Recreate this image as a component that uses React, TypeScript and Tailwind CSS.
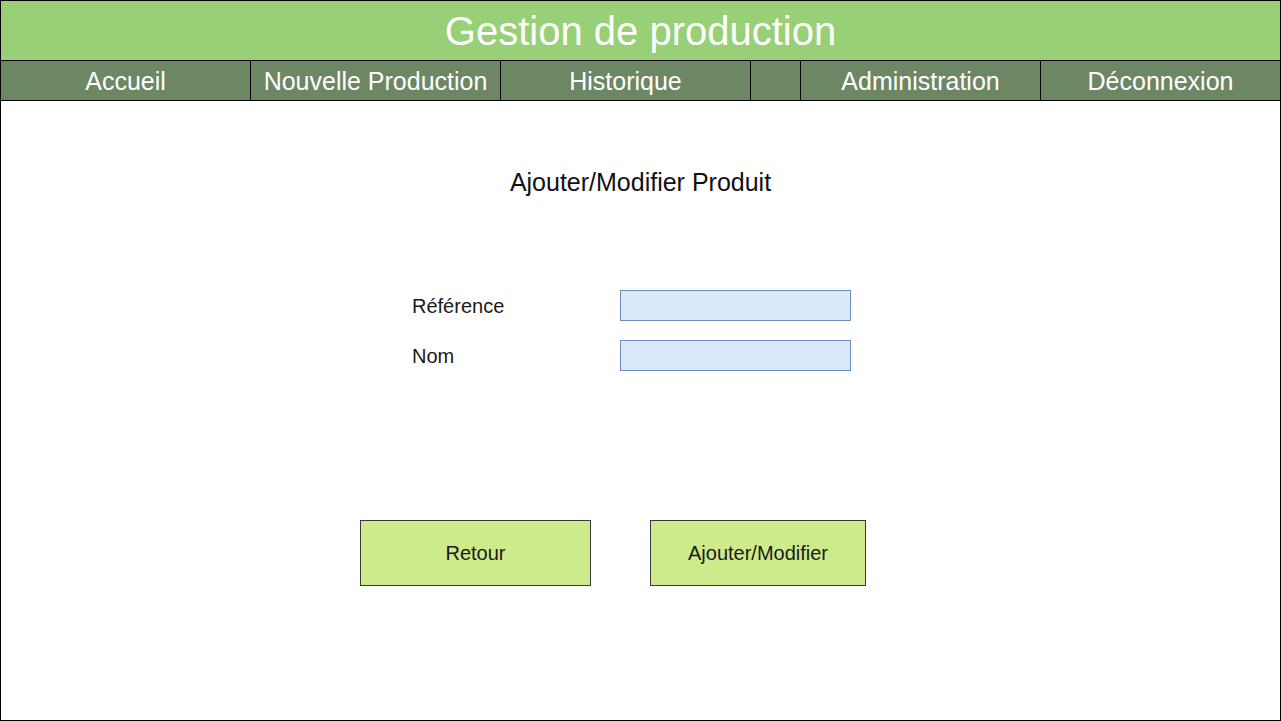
export default function App() {
  const tabs = [
    { label: "Accueil", w: "w-[250px]" },
    { label: "Nouvelle Production", w: "w-[250px]" },
    { label: "Historique", w: "w-[250px]" },
    { label: "", w: "w-[50px]" },
    { label: "Administration", w: "w-[240px]" },
  ]

  return (
    <div
      className="w-[1281px] h-[721px] border border-black bg-white flex flex-col"
      style={{ fontFamily: '"Liberation Sans", Arial, sans-serif' }}
    >
      {/* Header */}
      <div className="h-[60px] shrink-0 bg-[#97D077] border-b border-black flex items-center justify-center text-white text-[40px] leading-none">
        Gestion de production
      </div>

      {/* Menu */}
      <div className="h-[40px] shrink-0 bg-[#6D8764] border-b border-black flex text-white text-[25px] leading-none">
        {tabs.map((t, i) => (
          <div
            key={i}
            className={`${t.w} shrink-0 border-r border-black flex items-center justify-center pt-[2px]`}
          >
            {t.label}
          </div>
        ))}
        <div className="flex-1 flex items-center justify-center pt-[2px]">Déconnexion</div>
      </div>

      {/* Content */}
      <div className="flex-1 flex flex-col">
        <h1 className="mt-[66px] text-center text-[25px] leading-[30px] text-[#111]">
          Ajouter/Modifier Produit
        </h1>

        <div className="mt-[93px] ml-[411px] flex flex-col gap-[19px] text-[20px] text-[#1a1a1a]">
          <div className="flex items-center h-[31px]">
            <span className="w-[208px]">Référence</span>
            <input className="w-[231px] h-[31px] bg-[#DAE8FC] border border-[#6C8EBF] outline-none" />
          </div>
          <div className="flex items-center h-[31px]">
            <span className="w-[208px]">Nom</span>
            <input className="w-[231px] h-[31px] bg-[#DAE8FC] border border-[#6C8EBF] outline-none" />
          </div>
        </div>

        <div className="mt-[149px] ml-[359px] flex gap-[59px] text-[20px] text-[#1a1a1a]">
          <button className="w-[231px] h-[66px] bg-[#CDEB8B] border border-[#36393D]">
            Retour
          </button>
          <button className="w-[216px] h-[66px] bg-[#CDEB8B] border border-[#36393D]">
            Ajouter/Modifier
          </button>
        </div>
      </div>
    </div>
  )
}
